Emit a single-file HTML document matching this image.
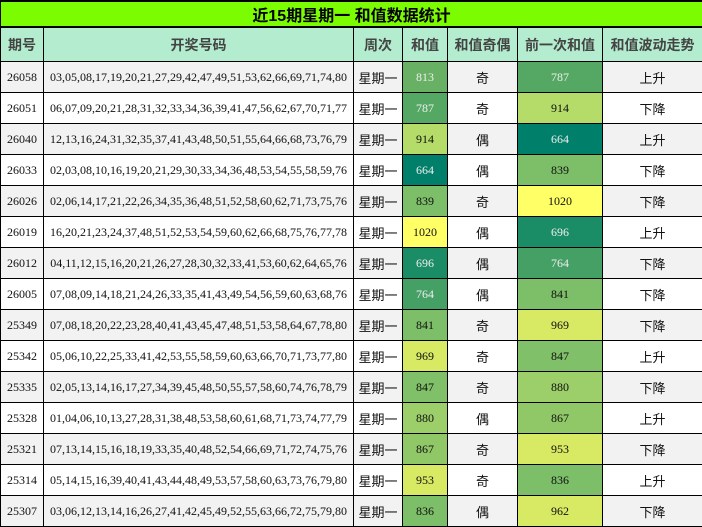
<!DOCTYPE html>
<html><head><meta charset="utf-8"><style>
html,body{margin:0;padding:0;background:#fff;}
table{border-collapse:collapse;table-layout:fixed;width:702px;position:absolute;left:0;top:0;}
td,th{border:1px solid #000;text-align:center;padding:0;overflow:hidden;white-space:nowrap;}
.t th{background:#7cfc00;height:23px;font:bold 16px "Liberation Sans","Noto Sans CJK SC",sans-serif;color:#000;border-width:2px 1px 2px 1px;}
.h th{background:#b3ecce;height:33px;font:bold 14px "Liberation Sans","Noto Sans CJK SC",sans-serif;color:#444;}
td{height:30px;font:12px "Liberation Serif","Noto Sans CJK SC",serif;color:#111;}
td.c{font:13px "Liberation Sans","Noto Sans CJK SC",sans-serif;}
tr.g td{background:#f2f2f2;}
td.w{color:#eee;}
</style></head><body>
<table>
<colgroup><col style="width:43px"><col style="width:310px"><col style="width:49px"><col style="width:45px"><col style="width:70px"><col style="width:85px"><col style="width:100px"></colgroup>
<tr class="t"><th colspan="7">近15期星期一 和值数据统计</th></tr>
<tr class="h"><th>期号</th><th>开奖号码</th><th>周次</th><th>和值</th><th>和值奇偶</th><th>前一次和值</th><th>和值波动走势</th></tr>
<tr class="g"><td>26058</td><td>03,05,08,17,19,20,21,27,29,42,47,49,51,53,62,66,69,71,74,80</td><td class="c">星期一</td><td class="w" style="background:#68b064">813</td><td class="c">奇</td><td class="w" style="background:#55a864">787</td><td class="c">上升</td></tr>
<tr><td>26051</td><td>06,07,09,20,21,28,31,32,33,34,36,39,41,47,56,62,67,70,71,77</td><td class="c">星期一</td><td class="w" style="background:#55a864">787</td><td class="c">奇</td><td style="background:#b5dc68">914</td><td class="c">下降</td></tr>
<tr class="g"><td>26040</td><td>12,13,16,24,31,32,35,37,41,43,48,50,51,55,64,66,68,73,76,79</td><td class="c">星期一</td><td style="background:#b5dc68">914</td><td class="c">偶</td><td class="w" style="background:#00806a">664</td><td class="c">上升</td></tr>
<tr><td>26033</td><td>02,03,08,10,16,19,20,21,29,30,33,34,36,48,53,54,55,58,59,76</td><td class="c">星期一</td><td class="w" style="background:#00806a">664</td><td class="c">偶</td><td style="background:#7dbe68">839</td><td class="c">下降</td></tr>
<tr class="g"><td>26026</td><td>02,06,14,17,21,22,26,34,35,36,48,51,52,58,60,62,71,73,75,76</td><td class="c">星期一</td><td style="background:#7dbe68">839</td><td class="c">奇</td><td style="background:#ffff66">1020</td><td class="c">下降</td></tr>
<tr><td>26019</td><td>16,20,21,23,24,37,48,51,52,53,54,59,60,62,66,68,75,76,77,78</td><td class="c">星期一</td><td style="background:#ffff66">1020</td><td class="c">偶</td><td class="w" style="background:#1a8c66">696</td><td class="c">上升</td></tr>
<tr class="g"><td>26012</td><td>04,11,12,15,16,20,21,26,27,28,30,32,33,41,53,60,62,64,65,76</td><td class="c">星期一</td><td class="w" style="background:#1a8c66">696</td><td class="c">偶</td><td class="w" style="background:#45a066">764</td><td class="c">下降</td></tr>
<tr><td>26005</td><td>07,08,09,14,18,21,24,26,33,35,41,43,49,54,56,59,60,63,68,76</td><td class="c">星期一</td><td class="w" style="background:#45a066">764</td><td class="c">偶</td><td style="background:#7dbe68">841</td><td class="c">下降</td></tr>
<tr class="g"><td>25349</td><td>07,08,18,20,22,23,28,40,41,43,45,47,48,51,53,58,64,67,78,80</td><td class="c">星期一</td><td style="background:#7dbe68">841</td><td class="c">奇</td><td style="background:#d8ea64">969</td><td class="c">下降</td></tr>
<tr><td>25342</td><td>05,06,10,22,25,33,41,42,53,55,58,59,60,63,66,70,71,73,77,80</td><td class="c">星期一</td><td style="background:#d8ea64">969</td><td class="c">奇</td><td style="background:#80c068">847</td><td class="c">上升</td></tr>
<tr class="g"><td>25335</td><td>02,05,13,14,16,17,27,34,39,45,48,50,55,57,58,60,74,76,78,79</td><td class="c">星期一</td><td style="background:#80c068">847</td><td class="c">奇</td><td style="background:#9ccf6a">880</td><td class="c">下降</td></tr>
<tr><td>25328</td><td>01,04,06,10,13,27,28,31,38,48,53,58,60,61,68,71,73,74,77,79</td><td class="c">星期一</td><td style="background:#9ccf6a">880</td><td class="c">偶</td><td style="background:#90c868">867</td><td class="c">上升</td></tr>
<tr class="g"><td>25321</td><td>07,13,14,15,16,18,19,33,35,40,48,52,54,66,69,71,72,74,75,76</td><td class="c">星期一</td><td style="background:#90c868">867</td><td class="c">奇</td><td style="background:#d8ea64">953</td><td class="c">下降</td></tr>
<tr><td>25314</td><td>05,14,15,16,39,40,41,43,44,48,49,53,57,58,60,63,73,76,79,80</td><td class="c">星期一</td><td style="background:#d8ea64">953</td><td class="c">奇</td><td style="background:#7dbe68">836</td><td class="c">上升</td></tr>
<tr class="g"><td>25307</td><td>03,06,12,13,14,16,26,27,41,42,45,49,52,55,63,66,72,75,79,80</td><td class="c">星期一</td><td style="background:#7dbe68">836</td><td class="c">偶</td><td style="background:#d8ea64">962</td><td class="c">下降</td></tr>
</table>
</body></html>
